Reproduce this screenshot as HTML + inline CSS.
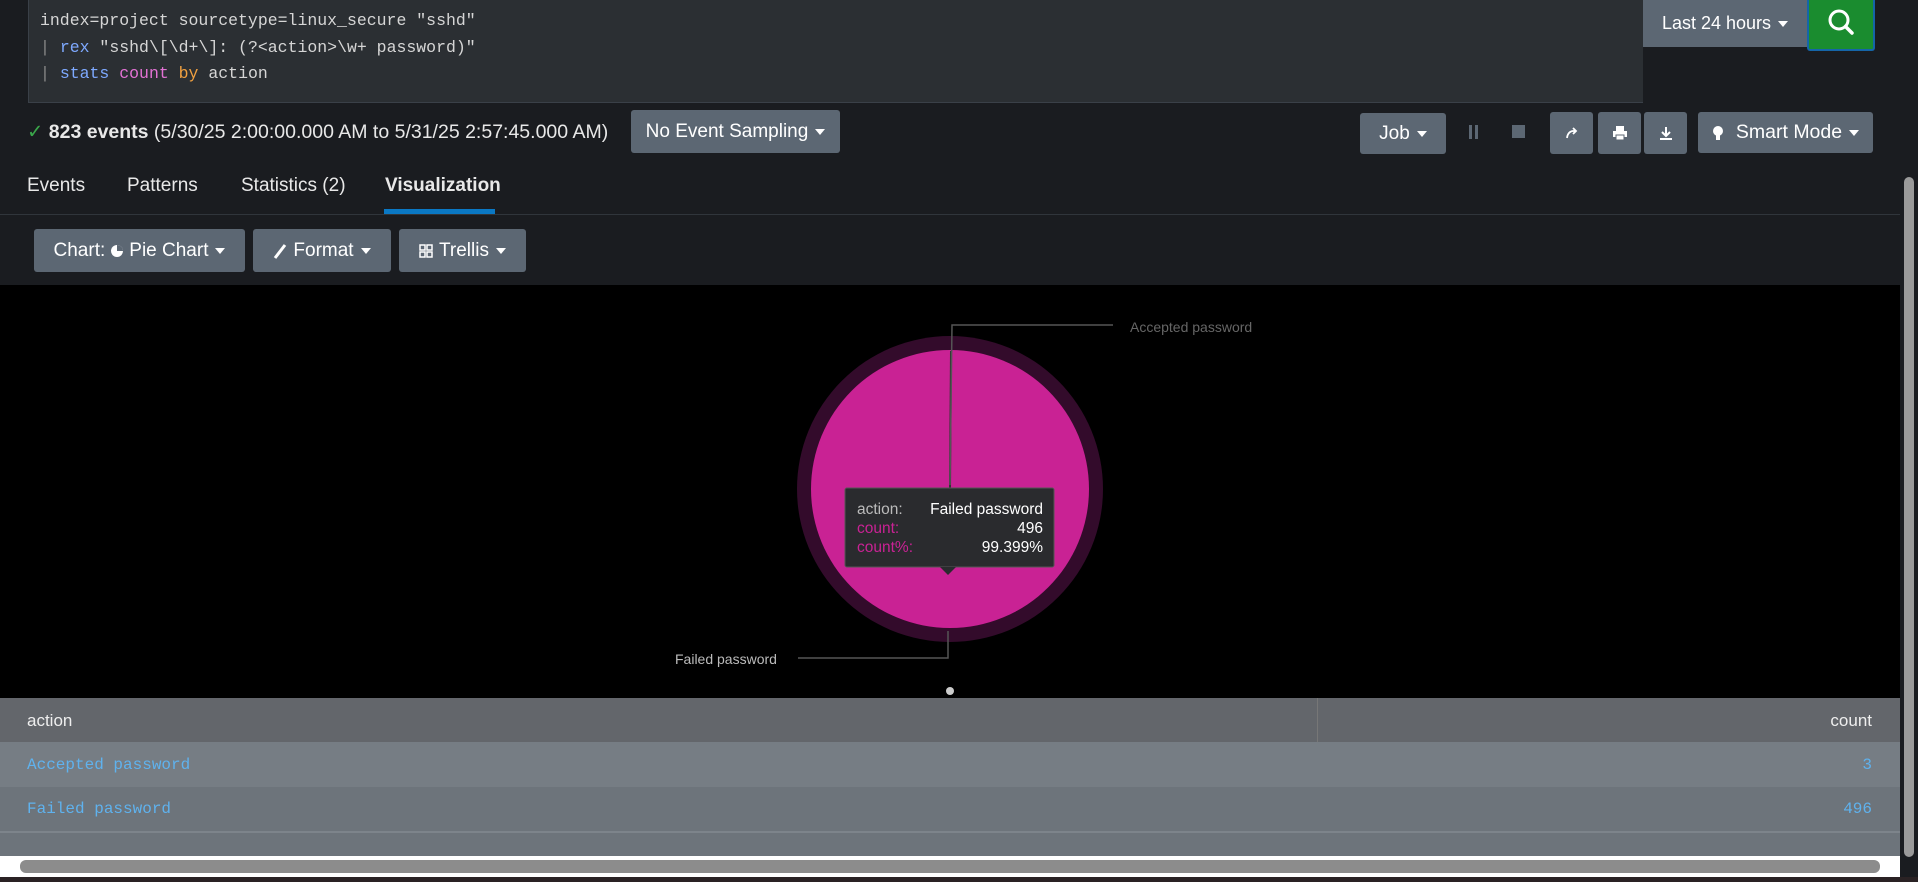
<!DOCTYPE html>
<html><head><meta charset="utf-8"><style>
*{box-sizing:border-box;margin:0;padding:0}
body{width:1918px;height:882px;background:#1a1c20;position:relative;overflow:hidden;font-family:"Liberation Sans",sans-serif;color:#e8e8e8}
.a{position:absolute}
.btn{position:absolute;background:#5c6773;border-radius:3px;color:#fff;font-size:18px;display:flex;align-items:center;justify-content:center}
.car{display:inline-block;width:0;height:0;border-left:5px solid transparent;border-right:5px solid transparent;border-top:6px solid #fff;margin-left:7px;vertical-align:middle}
.q{font-family:"Liberation Mono",monospace;font-size:16.5px;color:#d6d6d6;position:absolute;left:40px}
</style></head><body>
<div class="a" style="left:28px;top:0;width:1615px;height:103px;background:#2b2f33;border-bottom:1px solid #3a4048;border-left:1px solid #3a4048"></div>
<div class="q" style="top:11px">index=project sourcetype=linux_secure "sshd"</div>
<div class="q" style="top:38px"><span style="color:#888">|</span> <span style="color:#7ea9ff">rex</span> "sshd\[\d+\]: (?&lt;action&gt;\w+ password)"</div>
<div class="q" style="top:64px"><span style="color:#888">|</span> <span style="color:#7ea9ff">stats</span> <span style="color:#e272d4">count</span> <span style="color:#f0a040">by</span> action</div>
<div class="btn" style="left:1643px;top:0;width:164px;height:47px;border-radius:0">Last 24 hours<span class="car"></span></div>
<div class="a" style="left:1807px;top:0;width:68px;height:51px;background:#1a8c2f;border:2px solid #1565a8;border-top:none;border-radius:0 0 3px 3px"><svg width="68" height="51" viewBox="0 0 68 51" style="position:absolute;left:-2px;top:0"><circle cx="32" cy="20" r="9" fill="none" stroke="#fff" stroke-width="3"/><line x1="38.5" y1="26.5" x2="45" y2="33" stroke="#fff" stroke-width="3.5" stroke-linecap="round"/></svg></div>
<div class="a" style="left:27px;top:120px;font-size:19.5px;white-space:nowrap"><span style="color:#3aa64a">✓</span> <b>823 events</b> (5/30/25 2:00:00.000 AM to 5/31/25 2:57:45.000 AM)</div>
<div class="btn" style="left:631px;top:110px;width:209px;height:43px;font-size:19px">No Event Sampling<span class="car"></span></div>
<div class="btn" style="left:1360px;top:113px;width:86px;height:41px;font-size:19px">Job<span class="car"></span></div>
<div class="a" style="left:1469px;top:125px;width:3px;height:14px;background:#5c6773"></div><div class="a" style="left:1475px;top:125px;width:3px;height:14px;background:#5c6773"></div>
<div class="a" style="left:1512px;top:125px;width:13px;height:13px;background:#5c6773"></div>
<div class="btn" style="left:1550px;top:112px;width:43px;height:42px"><svg width="16" height="16"><path d="M3 13 Q4 5 12 6 M9 3l3 3-3 3" stroke="#fff" stroke-width="1.8" fill="none"/></svg></div>
<div class="btn" style="left:1598px;top:112px;width:43px;height:42px"><svg width="16" height="16"><rect x="4" y="1" width="8" height="5" fill="#fff"/><rect x="1" y="6" width="14" height="6" fill="#fff"/><rect x="4" y="10" width="8" height="5" fill="#fff" stroke="#5c6773"/></svg></div>
<div class="btn" style="left:1644px;top:112px;width:43px;height:42px"><svg width="16" height="16"><path d="M8 2v9M4 7l4 4 4-4M2 14h12" stroke="#fff" stroke-width="2" fill="none"/></svg></div>
<div class="btn" style="left:1698px;top:112px;width:175px;height:41px;font-size:19.5px"><svg width="12" height="16" style="margin-right:12px"><circle cx="6" cy="6" r="5" fill="#fff"/><rect x="4" y="10" width="4" height="5" fill="#fff"/></svg>Smart Mode<span class="car"></span></div>
<div class="a" style="left:27px;top:175px;font-size:19px">Events</div>
<div class="a" style="left:127px;top:175px;font-size:19px">Patterns</div>
<div class="a" style="left:241px;top:175px;font-size:19px">Statistics (2)</div>
<div class="a" style="left:385px;top:175px;font-size:19px;font-weight:bold">Visualization</div>
<div class="a" style="left:384px;top:209px;width:111px;height:5px;background:#0a78c4"></div>
<div class="a" style="left:0;top:214px;width:1900px;height:1px;background:#30353b"></div>
<div class="btn" style="left:34px;top:229px;width:211px;height:43px;font-size:19px">Chart: <svg width="14" height="14" style="margin:0 5px"><circle cx="7" cy="7" r="6" fill="#fff"/><path d="M7 7V1A6 6 0 0 1 13 7Z" fill="#5c6773"/></svg>Pie Chart<span class="car"></span></div>
<div class="btn" style="left:253px;top:229px;width:138px;height:43px;font-size:19px"><svg width="14" height="16" style="margin-right:6px"><path d="M2 15 L12 2" stroke="#fff" stroke-width="3"/></svg>Format<span class="car"></span></div>
<div class="btn" style="left:399px;top:229px;width:127px;height:43px;font-size:19px"><svg width="14" height="14" style="margin-right:6px"><rect x="1" y="1" width="5" height="5" fill="none" stroke="#fff" stroke-width="1.5"/><rect x="8" y="1" width="5" height="5" fill="none" stroke="#fff" stroke-width="1.5"/><rect x="1" y="8" width="5" height="5" fill="none" stroke="#fff" stroke-width="1.5"/><rect x="8" y="8" width="5" height="5" fill="none" stroke="#fff" stroke-width="1.5"/></svg>Trellis<span class="car"></span></div>
<div class="a" style="left:0;top:285px;width:1900px;height:413px;background:#000"></div>
<svg class="a" style="left:0;top:285px" width="1900" height="413">
<circle cx="950" cy="204" r="153" fill="#330b2b"/>
<circle cx="950" cy="204" r="139" fill="#c92294"/>
<line x1="951" y1="66" x2="950" y2="204" stroke="#333" stroke-width="2"/>
<polyline points="950,200 952,40 1113,40" fill="none" stroke="#555" stroke-width="1.5"/>
<text x="1130" y="47" fill="#666" font-size="14" font-family="Liberation Sans">Accepted password</text>
<polyline points="948,346 948,373 798,373" fill="none" stroke="#555" stroke-width="1.5"/>
<text x="675" y="379" fill="#bbb" font-size="14" font-family="Liberation Sans">Failed password</text>
<circle cx="950" cy="406" r="4" fill="#ccc"/>
<rect x="845" y="203" width="209" height="79" rx="2" fill="#2a2b2e" stroke="#555"/>
<path d="M940 282 L948 290 L956 282Z" fill="#2a2b2e"/>
<g font-family="Liberation Sans" font-size="15.5">
<text x="857" y="229" fill="#bbb">action:</text><text x="1043" y="229" fill="#fff" text-anchor="end">Failed password</text>
<text x="857" y="248" fill="#c92294">count:</text><text x="1043" y="248" fill="#fff" text-anchor="end">496</text>
<text x="857" y="267" fill="#c92294">count%:</text><text x="1043" y="267" fill="#fff" text-anchor="end">99.399%</text>
</g></svg>
<div class="a" style="left:0;top:698px;width:1900px;height:44px;background:#63666b"></div>
<div class="a" style="left:1317px;top:698px;width:1px;height:44px;background:#777"></div>
<div class="a" style="left:27px;top:711px;font-size:17px;color:#eee">action</div>
<div class="a" style="right:46px;top:711px;font-size:17px;color:#eee">count</div>
<div class="a" style="left:0;top:742px;width:1900px;height:45px;background:#767d84"></div>
<div class="a" style="left:0;top:787px;width:1900px;height:69px;background:#6d747b"></div>
<div class="a" style="left:0;top:831px;width:1900px;height:2px;background:#7d848b"></div>
<div class="a" style="left:27px;top:756px;font-family:'Liberation Mono',monospace;font-size:16px;color:#5fb2ee">Accepted password</div>
<div class="a" style="right:46px;top:756px;font-family:'Liberation Mono',monospace;font-size:16px;color:#5fb2ee">3</div>
<div class="a" style="left:27px;top:800px;font-family:'Liberation Mono',monospace;font-size:16px;color:#5fb2ee">Failed password</div>
<div class="a" style="right:46px;top:800px;font-family:'Liberation Mono',monospace;font-size:16px;color:#5fb2ee">496</div>
<div class="a" style="left:0;top:856px;width:1900px;height:21px;background:#fff"></div>
<div class="a" style="left:20px;top:860px;width:1860px;height:13px;background:#8c8c8c;border-radius:6px"></div>
<div class="a" style="left:0;top:877px;width:1918px;height:5px;background:#2a2224"></div>
<div class="a" style="left:1900px;top:0;width:18px;height:877px;background:#1a1c20"></div>
<div class="a" style="left:1904px;top:177px;width:10px;height:680px;background:#9a9a9a;border-radius:5px"></div>
</body></html>
